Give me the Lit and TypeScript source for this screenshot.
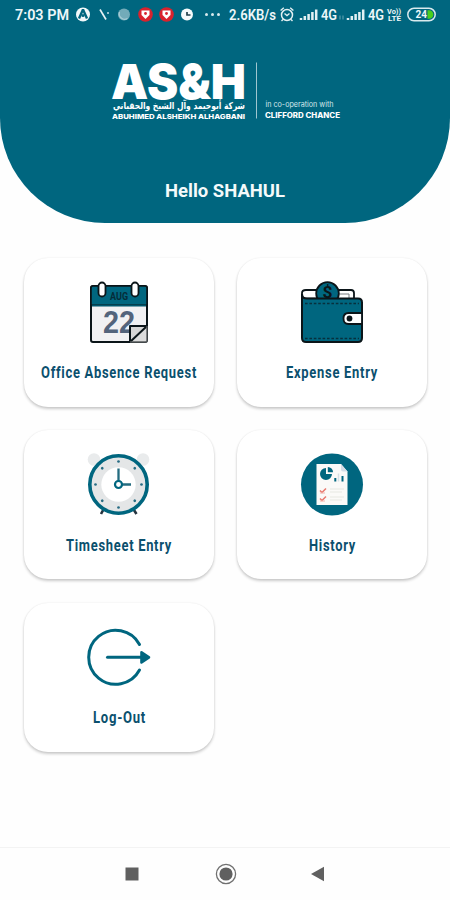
import { LitElement, html, svg, css, type TemplateResult } from "lit";
import { customElement } from "lit/decorators.js";

const teal = "#00667f";

// One line of text set to an exact width, so condensed faces keep their measure.
const line = (cls: string, text: string, x: number, y: number, width: number) => svg`
  <text class=${cls} x=${x} y=${y} textLength=${width} lengthAdjust="spacingAndGlyphs">${text}</text>`;

const calendar = html`<svg class="icon" viewBox="0 0 98 80">
  <rect x="21" y="16" width="56" height="56" rx="2" fill="#f1f1f3" stroke="#0b1519" stroke-width="2"/>
  <path d="M21 35V18a2 2 0 0 1 2-2h52a2 2 0 0 1 2 2v17z" fill=${teal} stroke="#0b1519" stroke-width="1.6"/>
  <path d="M22 35.5h54" stroke="#00566c" stroke-width="2"/>
  <rect x="28.5" y="12.5" width="7" height="14" rx="3.5" fill="#fff" stroke="#0b1519" stroke-width="1.8"/>
  <rect x="61.5" y="12.5" width="7" height="14" rx="3.5" fill="#fff" stroke="#0b1519" stroke-width="1.8"/>
  ${line("aug", "AUG", 40, 29.5, 18)}
  ${line("day", "22", 33, 62.5, 32)}
  <path d="M60 56h17v16H60z" fill="#dcdcdc"/>
  <path d="M60 72V56h17z" fill="#d6d6d6" stroke="#0b1519" stroke-width="2" stroke-linejoin="round"/>
  <path d="M60 72h15.500a1.500 1.500 0 0 0 1.500-1.500V56" fill="none" stroke="#55595b" stroke-width="1.400"/>
</svg>`;

const wallet = html`<svg class="icon" viewBox="-2 0 98 80">
  <path d="M17 34V23q0-3 4-3h45q3 0 3 3v8" fill="#fff" stroke="#0b1519" stroke-width="1.800"/>
  <path d="M18 28h14M54 24h10v4" fill="none" stroke="#777d80" stroke-width="1"/>
  <circle cx="42.500" cy="23.500" r="11.300" fill=${teal} stroke="#0b1519" stroke-width="1.800"/>
  ${line("dollar", "$", 37.5, 28, 10)}
  <path d="M17 24q0 4.500 5 4.500h51q4 0 4 4V68q0 4-4 4H21q-4 0-4-4z" fill=${teal} stroke="#0b1519" stroke-width="2"/>
  <path d="M20 33.500h54M20 68.500h54" stroke="#07303d" stroke-width="1.600" stroke-dasharray="2.600 1.800"/>
  <path d="M77 43H63.500q-5 0-5 5.500t5 5.500H77z" fill="#fff" stroke="#0b1519" stroke-width="1.800"/>
  <circle cx="64.500" cy="48.500" r="2.900" fill="#0b1519"/>
</svg>`;

const dots = [0, 45, 90, 135, 180, 225, 270, 315];
const clock = html`<svg class="icon" viewBox="0 -2.5 98 80">
  <circle cx="24" cy="15" r="6.300" fill="#e9ebec"/><circle cx="73" cy="15" r="6.300" fill="#e9ebec"/>
  <path d="M34 64l-3 5.500M63 64l3.500 5.500" stroke="#263440" stroke-width="2.600"/>
  <circle cx="48.500" cy="40" r="28.700" fill="#e4e6e7" stroke=${teal} stroke-width="3.600"/>
  <circle cx="48.500" cy="40" r="17.200" fill="#fff"/>
  ${dots.map(a => svg`<circle cx="48.5" cy="17" r="1.35" fill="#276c83" transform="rotate(${a} 48.5 40)"/>`)}
  <path d="M48.500 37V24M52 40h9" stroke="#246c80" stroke-width="2.300"/>
  <circle cx="48.500" cy="40" r="3.500" fill="#fff" stroke=${teal} stroke-width="2.200"/>
</svg>`;

const report = html`<svg class="icon" viewBox="-2 -2.5 98 80">
  <circle cx="47" cy="40" r="31" fill=${teal}/>
  <path d="M31.500 19.500H56l6.500 7.500v33.500h-31z" fill="#fbfaf8"/>
  <path d="M56 19.500V25q0 2 2 2h4.500z" fill="#d5dde6"/>
  <path d="M41 23.500a6 6 0 1 0 6 6h-6z" fill=${teal}/>
  <path d="M42.800 22.500v5.300h5.300a5.400 5.400 0 0 0-5.300-5.300z" fill=${teal}/>
  <path d="M49.300 33.500h2V37h-2zM56.500 31.500h2V37h-2z" fill=${teal}/>
  <path d="M53.500 29v8" stroke="#d6e0e6" stroke-width="1.500"/>
  <path d="M35 46l2 2 4-4M35 54l2 2 4-4" fill="none" stroke="#e8786d" stroke-width="1.500"/>
  <path d="M35 48.500h5M35 56.500h5" stroke="#f3b5ad" stroke-width="1"/>
  <path d="M45 44.500h14M45 47.500h12M45 52.500h14M45 55.500h12" stroke="#e8e7e1" stroke-width="1.200"/>
</svg>`;

const logout = html`<svg class="icon" viewBox="-0.5 0 98 80">
  <path d="M69 29.500A27 27 0 1 0 69 55" fill="none" stroke=${teal} stroke-width="3" stroke-linecap="round"/>
  <path d="M37 42.300h34" stroke=${teal} stroke-width="3" stroke-linecap="round"/>
  <path d="M71 37.200l7.500 5.100-7.500 5.100z" fill=${teal} stroke=${teal} stroke-width="2.600" stroke-linejoin="round"/>
</svg>`;

interface Tile { label: string; width: number; icon: TemplateResult }
const tiles: Tile[] = [
  { label: "Office Absence Request", width: 156, icon: calendar },
  { label: "Expense Entry", width: 92, icon: wallet },
  { label: "Timesheet Entry", width: 106, icon: clock },
  { label: "History", width: 47, icon: report },
  { label: "Log-Out", width: 53, icon: logout },
];

const bars = svg`<path d="M1 20v-2M4.800 20v-4M8.600 20v-6M12.400 20V12M16.200 20V9.500" stroke="#e3f0f3" stroke-width="2.500"/>`;
const badge = svg`<circle cx="7.500" cy="14.500" r="7.300" fill="#d9222d"/>
  <path d="M3.500 10.500h8v4.500l-4 4-4-4z" fill="#fff"/><circle cx="7.500" cy="13.500" r="1.400" fill="#d9222d"/>`;

@customElement("status-bar")
class StatusBar extends LitElement {
  static styles = css`
    :host { display: flex; height: 30px; padding-left: 15px; }
    svg { display: block; height: 30px; flex: none; overflow: visible; }
    text { font-family: Roboto, sans-serif; fill: #eef7f9; }
    .t { font-size: 14px; font-weight: 600; }
    .s { font-size: 7.5px; font-weight: 700; }
    .b { font-size: 10px; font-weight: 700; }
  `;
  private cell(width: number, gap: number, body: unknown) {
    return html`<svg width=${width} viewBox="0 0 ${width} 30" style="margin-right:${gap}px">${body}</svg>`;
  }
  render() {
    return html`
      ${this.cell(54, 7, line("t", "7:03 PM", 0, 19.5, 54))}
      ${this.cell(14, 9, svg`<circle cx="7" cy="14.500" r="7" fill="#f1f8fa"/>
        <path d="M7 9.500L3 18.500M7 9.500l4 9" stroke=${teal} stroke-width="2.400" fill="none"/><circle cx="7" cy="15.500" r="1.600" fill=${teal}/>`)}
      ${this.cell(11, 8, svg`<path d="M1 9.500l6 10" stroke="#e6f2f5" stroke-width="1.700"/><circle cx="9" cy="13" r="1" fill="#c3dfe6"/>`)}
      ${this.cell(12, 8, svg`<circle cx="6" cy="14.500" r="6" fill="#72abb9"/><path d="M1.500 12a5.500 5.500 0 0 0 8 6.500" fill="none" stroke="#a7ccd5" stroke-width="1.300"/>`)}
      ${this.cell(15, 6, badge)}
      ${this.cell(15, 7, badge)}
      ${this.cell(12, 12, svg`<circle cx="6" cy="14.500" r="6" fill="#f7fbfc"/><path d="M6 12v3h3.500" fill="none" stroke="#24414c" stroke-width="1.700"/>`)}
      ${this.cell(15, 9, svg`<circle cx="1.500" cy="14.500" r="1.500" fill="#d8eaee"/><circle cx="7.500" cy="14.500" r="1.500" fill="#d8eaee"/><circle cx="13.500" cy="14.500" r="1.500" fill="#d8eaee"/>`)}
      ${this.cell(47, 4, line("t", "2.6KB/s", 0, 19.5, 47))}
      ${this.cell(14, 6, svg`<circle cx="7" cy="15" r="5.500" fill="none" stroke="#e3f0f3" stroke-width="1.500"/>
        <path d="M.6 10.500l3.200-2.700M13.400 10.500l-3.200-2.700M4.500 13.500l2.500 2 2.500-2M3 19.500l-1.500 1.500M11 19.500l1.500 1.500" fill="none" stroke="#e3f0f3" stroke-width="1.400"/>`)}
      ${this.cell(18, 3, bars)}
      ${this.cell(16, 2, line("t", "4G", 0, 19.5, 16))}
      ${this.cell(6, 2, svg`<path d="M1 15.500v4M4 15.500v4" stroke="#4f97a8" stroke-width="1.300"/>`)}
      ${this.cell(18, 3, bars)}
      ${this.cell(16, 3, line("t", "4G", 0, 19.5, 16))}
      ${this.cell(14, 6, svg`${line("s", "Vo))", 0, 13.5, 14)}${line("s", "LTE", 1, 21, 13)}`)}
      ${this.cell(29, 0, svg`<rect x=".8" y="8.300" width="27.400" height="12.400" rx="6.200" fill="none" stroke="#d9eaee" stroke-width="1.500"/>
        <path d="M20.500 10.200h1.500a4.300 4.300 0 0 1 0 8.600h-1.500z" fill="#48cf1c"/>
        ${line("b", "24", 8.5, 18.2, 11.5)}`)}
    `;
  }
}

@customElement("firm-logo")
class FirmLogo extends LitElement {
  static styles = css`
    :host { display: block; width: 230px; height: 62px; }
    svg { display: block; overflow: visible; }
    text { fill: #fff; }
    .mark { font: 900 48.5px Inter, "Liberation Sans", sans-serif; }
    .arabic { font: bold 9.5px "DejaVu Sans", sans-serif; }
    .latin { font: 800 6.8px Inter, sans-serif; }
    .coop { font: 400 7.6px Inter, sans-serif; fill: #d3e6eb; }
    .chance { font: 800 7.2px Inter, sans-serif; }
  `;
  render() {
    return html`<svg width="230" height="62" viewBox="0 0 230 62">
      ${line("mark", "AS&H", -1, 37, 135)}
      ${line("arabic", "شركة أبوحيمد وآل الشيخ والحقباني", 1, 47.3, 132)}
      ${line("latin", "ABUHIMED ALSHEIKH ALHAGBANI", 0, 56.6, 133)}
      <path d="M144.500.5v56" stroke="#9fc6d0" stroke-width="1"/>
      ${line("coop", "in co-operation with", 153.5, 44.5, 68)}
      ${line("chance", "CLIFFORD CHANCE", 153, 55.5, 75)}
    </svg>`;
  }
}

@customElement("app-root")
class AppRoot extends LitElement {
  static styles = css`
    :host { display: flex; flex-direction: column; height: 900px; background: #fefefe; font-family: Roboto, sans-serif; overflow: hidden; }
    header { height: 222.500px; flex: none; background: #00667f; border-radius: 0 0 105px 105px; display: flex; flex-direction: column; }
    firm-logo { margin: 32px 0 0 112px; }
    .greeting { display: block; margin: 54px 0 0 165px; overflow: visible; }
    .hello { font: 700 18.5px Roboto, sans-serif; fill: #f4fafb; }
    main { flex: 1; display: grid; grid-template-columns: 190px 190px; grid-auto-rows: 149px; gap: 23.5px 23px; padding: 35px 0 0 24px; }
    .card { background: #fff; border-radius: 24px; box-shadow: 0 2px 3px rgba(0,0,0,.2), 0 0 2px rgba(0,0,0,.08); display: flex; flex-direction: column; align-items: center; }
    .icon { display: block; width: 98px; height: 80px; margin-top: 12px; }
    .caption { display: block; margin-top: 12.5px; overflow: visible; }
    .label { font: 700 16px Roboto, sans-serif; letter-spacing: .9px; fill: #0b506e; }
    .aug { font: 700 10px Roboto, sans-serif; fill: #052c39; }
    .day { font: 700 31px "Liberation Sans", sans-serif; fill: #53647c; }
    .dollar { font: 700 17px Roboto, sans-serif; fill: #0b1519; }
    nav { height: 52px; flex: none; border-top: 1px solid #f3f3f3; display: flex; align-items: center; padding-left: 125px; }
    nav svg { display: block; }
    .home { margin-left: 76px; }
    .back { margin-left: 74px; }
  `;
  render() {
    return html`
      <header>
        <status-bar></status-bar>
        <firm-logo></firm-logo>
        <svg class="greeting" width="120" height="24" viewBox="0 0 120 24">${line("hello", "Hello SHAHUL", 0, 19, 120)}</svg>
      </header>
      <main>
        ${tiles.map(t => html`<div class="card">${t.icon}
          <svg class="caption" width=${t.width} height="20" viewBox="0 0 ${t.width} 20">${line("label", t.label, 0, 15.5, t.width)}</svg>
        </div>`)}
      </main>
      <nav>
        <svg width="14" height="14" viewBox="0 0 14 14"><path d="M.5.500h13v13H.5z" fill="#606060"/></svg>
        <svg class="home" width="22" height="22" viewBox="0 0 22 22"><circle cx="11" cy="11" r="9.600" fill="none" stroke="#707070" stroke-width="1.300"/><circle cx="11" cy="11" r="6.600" fill="#606060"/></svg>
        <svg class="back" width="14" height="16" viewBox="0 0 14 16"><path d="M13 .8v14.400L0 8z" fill="#606060"/></svg>
      </nav>
    `;
  }
}
